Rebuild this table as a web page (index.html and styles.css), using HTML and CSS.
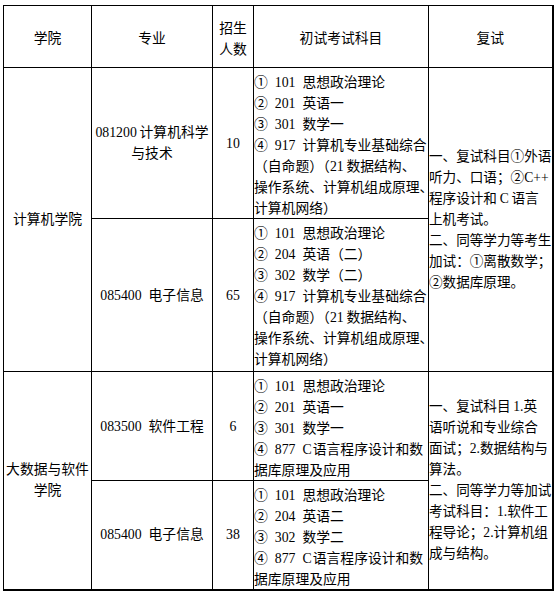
FILE: index.html
```html
<!DOCTYPE html>
<html lang="zh-CN">
<head>
<meta charset="utf-8">
<title>招生考试科目</title>
<link rel="stylesheet" href="styles.css">
</head>
<body>
<table class="grid">
  <colgroup>
    <col class="c1"><col class="c2"><col class="c3"><col class="c4"><col class="c5">
  </colgroup>
  <tr class="head">
    <th>学院</th>
    <th>专业</th>
    <th>招生<br>人数</th>
    <th>初试考试科目</th>
    <th>复试</th>
  </tr>
  <tr class="r1">
    <td rowspan="2" class="mid college">计算机学院</td>
    <td class="mid major">081200&#8201;计算机科学<br>与技术</td>
    <td class="mid num">10</td>
    <td class="subj"><div class="lines">① 101 思想政治理论<br>② 201 英语一<br>③ 301 数学一<br>④ 917 计算机专业基础综合<br>（自命题）（21&#8201;数据结构、<br>操作系统、计算机组成原理、<br>计算机网络）</div></td>
    <td rowspan="2" class="retest">一、复试科目①外语<br>听力、口语；②C++<br>程序设计和&#8201;C&#8201;语言<br>上机考试。<br>二、同等学力等考生<br>加试：①离散数学；<br>②数据库原理。</td>
  </tr>
  <tr class="r2">
    <td class="mid major">085400 电子信息</td>
    <td class="mid num">65</td>
    <td class="subj"><div class="lines">① 101 思想政治理论<br>② 204 英语（二）<br>③ 302 数学（二）<br>④ 917 计算机专业基础综合<br>（自命题）（21&#8201;数据结构、<br>操作系统、计算机组成原理、<br>计算机网络）</div></td>
  </tr>
  <tr class="r3">
    <td rowspan="2" class="mid college">大数据与软件<br>学院</td>
    <td class="mid major">083500 软件工程</td>
    <td class="mid num">6</td>
    <td class="subj"><div class="lines">① 101 思想政治理论<br>② 201 英语一<br>③ 301 数学一<br>④ 877 C&#8202;语言程序设计和数<br>据库原理及应用</div></td>
    <td rowspan="2" class="retest">一、复试科目&#8201;1.英<br>语听说和专业综合<br>面试；2.数据结构与<br>算法。<br>二、同等学力等加试<br>考试科目：1.软件工<br>程导论；2.计算机组<br>成与结构。</td>
  </tr>
  <tr class="r4">
    <td class="mid major">085400 电子信息</td>
    <td class="mid num">38</td>
    <td class="subj"><div class="lines">① 101 思想政治理论<br>② 204 英语二<br>③ 302 数学二<br>④ 877 C&#8202;语言程序设计和数<br>据库原理及应用</div></td>
  </tr>
</table>
</body>
</html>
```
FILE: styles.css
```css
html, body {
  margin: 0;
  padding: 0;
  background: #fff;
}

body {
  font-family: "Liberation Serif", "Noto Sans CJK SC", serif;
  font-size: 13.8px;
  line-height: 21px;
  color: #000;
  word-spacing: 3.5px;
}

.grid {
  margin: 5px 0 0 3px;
  border-collapse: collapse;
  table-layout: fixed;
  width: 550px;
  border-right: 2px solid #000;
  border-bottom: 2px solid #000;
}

.c1 { width: 88px; }
.c2 { width: 121px; }
.c3 { width: 41px; }
.c4 { width: 175px; }
.c5 { width: 124px; }

.grid th,
.grid td {
  border: 1px solid #000;
  padding: 0;
  white-space: nowrap;
  overflow: visible;
}

.grid th {
  font-weight: normal;
  text-align: center;
  vertical-align: middle;
  padding-top: 4px;
}

.head { height: 62px; }
.r1 { height: 151px; }
.r2 { height: 153px; }
.r3 { height: 109px; }
.r4 { height: 109px; }

.mid {
  text-align: center;
  vertical-align: middle;
}

.college {
  padding-top: 8px;
}

.major {
  padding-top: 6px;
}

.num {
  padding-top: 6px;
}

.subj {
  text-align: left;
  vertical-align: top;
  padding: 3px 0 0 1px;
}

.lines {
  margin: 4px 0 -4px;
}

.retest {
  text-align: left;
  vertical-align: middle;
  padding: 6px 0 0 0;
  font-size: 13.6px;
}
```
